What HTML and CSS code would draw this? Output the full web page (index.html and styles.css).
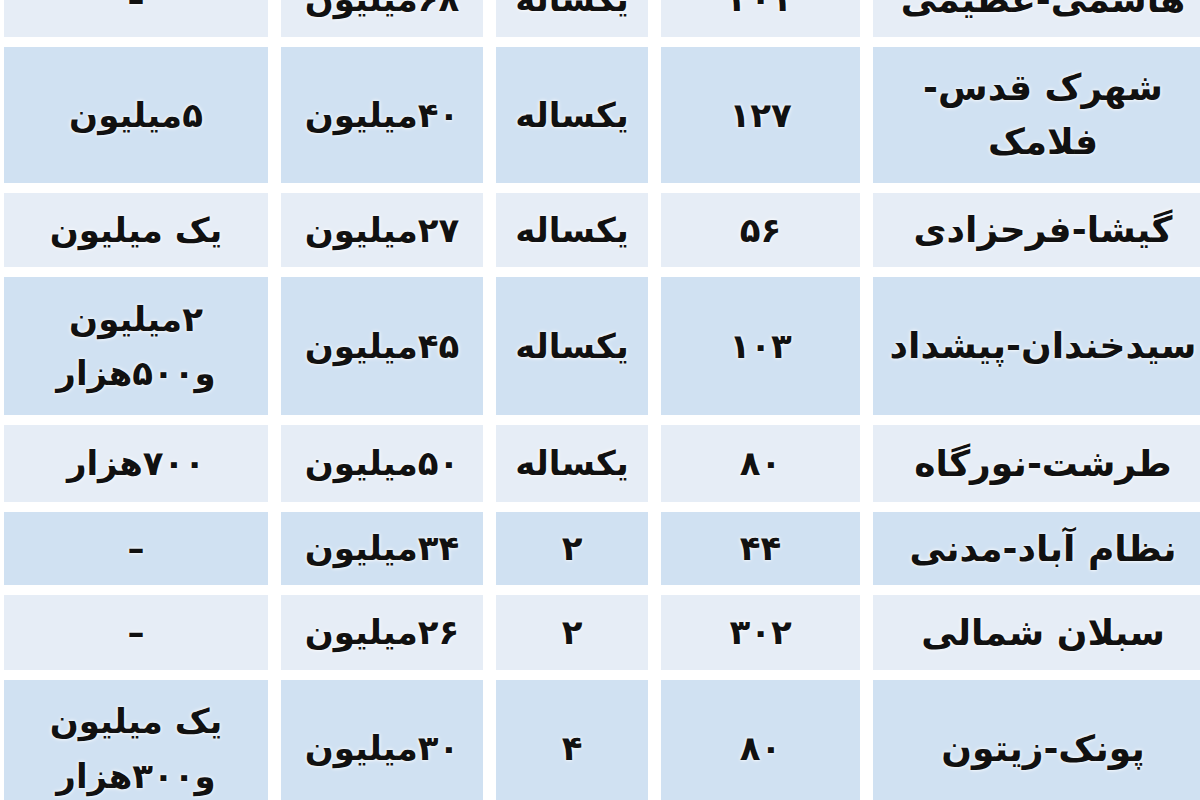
FILE: index.html
```html
<!DOCTYPE html>
<html lang="fa">
<head>
<meta charset="utf-8">
<link rel="stylesheet" href="styles.css">
</head>
<body>
<div class="table">
  <div class="cell light">–</div>
  <div class="cell light">۶۸میلیون</div>
  <div class="cell light">یکساله</div>
  <div class="cell light">۲۰۱</div>
  <div class="cell light place">هاشمی-عظیمی</div>

  <div class="cell blue">۵میلیون</div>
  <div class="cell blue">۴۰میلیون</div>
  <div class="cell blue">یکساله</div>
  <div class="cell blue">۱۲۷</div>
  <div class="cell blue place">شهرک قدس-<br>فلامک</div>

  <div class="cell light">یک میلیون</div>
  <div class="cell light">۲۷میلیون</div>
  <div class="cell light">یکساله</div>
  <div class="cell light">۵۶</div>
  <div class="cell light place">گیشا-فرحزادی</div>

  <div class="cell blue">۲میلیون<br>و۵۰۰هزار</div>
  <div class="cell blue">۴۵میلیون</div>
  <div class="cell blue">یکساله</div>
  <div class="cell blue">۱۰۳</div>
  <div class="cell blue place">سیدخندان-پیشداد</div>

  <div class="cell light">۷۰۰هزار</div>
  <div class="cell light">۵۰میلیون</div>
  <div class="cell light">یکساله</div>
  <div class="cell light">۸۰</div>
  <div class="cell light place">طرشت-نورگاه</div>

  <div class="cell blue">–</div>
  <div class="cell blue">۳۴میلیون</div>
  <div class="cell blue">۲</div>
  <div class="cell blue">۴۴</div>
  <div class="cell blue place">نظام آباد-مدنی</div>

  <div class="cell light">–</div>
  <div class="cell light">۲۶میلیون</div>
  <div class="cell light">۲</div>
  <div class="cell light">۳۰۲</div>
  <div class="cell light place">سبلان شمالی</div>

  <div class="cell blue">یک میلیون<br>و۳۰۰هزار</div>
  <div class="cell blue">۳۰میلیون</div>
  <div class="cell blue">۴</div>
  <div class="cell blue">۸۰</div>
  <div class="cell blue place">پونک-زیتون</div>
</div>
</body>
</html>
```
FILE: styles.css
```css
html, body {
  margin: 0;
  padding: 0;
  background: #ffffff;
  overflow: hidden;
}

.table {
  display: grid;
  grid-template-columns: 264px 202px 152px 199px 340px;
  grid-template-rows: 75px 136px 74px 138px 77px 73px 75px 137px;
  column-gap: 13px;
  row-gap: 10px;
  margin: -38px 0 0 4px;
  width: 1209px;
}

.cell {
  display: flex;
  align-items: center;
  justify-content: center;
  text-align: center;
  direction: rtl;
  font-family: "DejaVu Sans", sans-serif;
  font-weight: bold;
  font-size: 34px;
  line-height: 1.6;
  color: #111111;
  text-shadow: 0 0 3px #ffffff, 0 0 5px rgba(255,255,255,0.7);
}

.place {
  font-size: 36px;
  line-height: 1.5;
}

.blue {
  background: #d0e1f2;
}

.light {
  background: #e6edf6;
}
```
